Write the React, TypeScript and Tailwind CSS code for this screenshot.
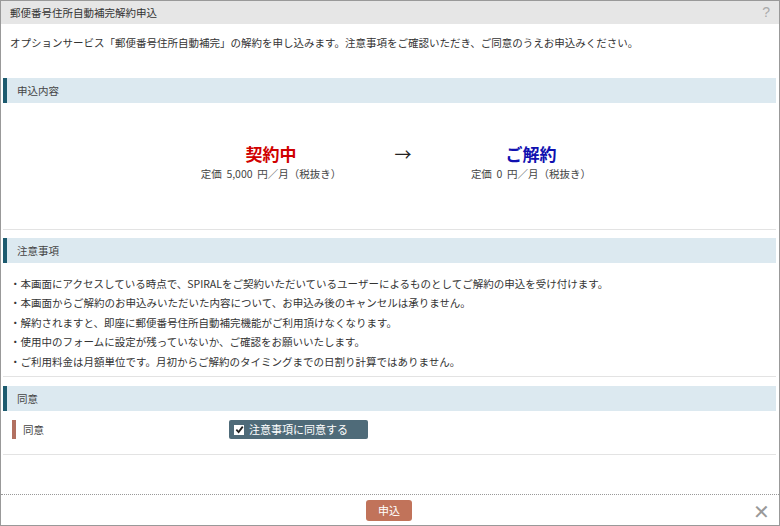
import React from "react";

const notes = [
  "本画面にアクセスしている時点で、SPIRALをご契約いただいているユーザーによるものとしてご解約の申込を受け付けます。",
  "本画面からご解約のお申込みいただいた内容について、お申込み後のキャンセルは承りません。",
  "解約されますと、即座に郵便番号住所自動補完機能がご利用頂けなくなります。",
  "使用中のフォームに設定が残っていないか、ご確認をお願いいたします。",
  "ご利用料金は月額単位です。月初からご解約のタイミングまでの日割り計算ではありません。",
];

function SectionHeader({ title }: { title: string }) {
  return (
    <div className="flex h-[25px] items-center bg-[#dce9f0] border-l-[4px] border-[#1d5b6f] pl-[10px] text-[#444]">
      {title}
    </div>
  );
}

function PlanBlock({ label, color, price }: { label: string; color: string; price: string }) {
  return (
    <div className="flex flex-col items-center">
      <div className={`text-[17px] font-bold leading-[22px] ${color}`}>{label}</div>
      <div className="mt-[1px] text-[10.5px] text-[#444] leading-[16px] whitespace-pre">{price}</div>
    </div>
  );
}

export default function App() {
  return (
    <div
      className="w-[780px] h-[526px] flex flex-col border border-[#999] bg-white text-[10.5px] text-[#333] overflow-hidden"
      style={{ fontFamily: '"Noto Sans CJK JP", "Noto Sans", sans-serif' }}
    >
      {/* title bar */}
      <div className="flex h-[23px] shrink-0 items-center justify-between bg-[#e6e6e6] pl-[9px] pr-[9px]">
        <span className="text-[#333]">郵便番号住所自動補完解約申込</span>
        <span className="text-[14px] text-[#aaa]" style={{ fontFamily: '"Liberation Sans", sans-serif' }}>?</span>
      </div>

      <div className="flex-1 pl-[2px] pr-[3px]">
        <p className="pl-[7px] pt-[10px] leading-[18px]">
          オプションサービス「郵便番号住所自動補完」の解約を申し込みます。注意事項をご確認いただき、ご同意のうえお申込みください。
        </p>

        <div className="mt-[26px]">
          <SectionHeader title="申込内容" />
          <div className="flex h-[126px] items-center pl-[168px] pb-[8px]">
            <div className="w-[200px] flex justify-center">
              <PlanBlock label="契約中" color="text-[#d00000]" price="定価  5,000  円／月（税抜き）" />
            </div>
            <div className="w-[64px] text-center text-[17px] text-[#222] -mt-[16px]">→</div>
            <div className="w-[192px] flex justify-center">
              <PlanBlock label="ご解約" color="text-[#1010b0]" price="定価  0  円／月（税抜き）" />
            </div>
          </div>
          <div className="h-px bg-[#e3e3e3]" />
        </div>

        <div className="mt-[8px]">
          <SectionHeader title="注意事項" />
          <ul className="pt-[11px] pb-[5px] pl-[7px]">
            {notes.map((n) => (
              <li key={n} className="leading-[19.4px]">・{n}</li>
            ))}
          </ul>
          <div className="h-px bg-[#e3e3e3]" />
        </div>

        <div className="mt-[9px]">
          <SectionHeader title="同意" />
          <div className="flex items-center h-[19px] mt-[9px]">
            <div className="w-[226px] flex items-center pl-[9px]">
              <span className="w-[4px] h-[19px] bg-[#b27060]" />
              <span className="pl-[7px] text-[#444]">同意</span>
            </div>
            <label className="flex items-center h-[19px] w-[139px] rounded-[2px] bg-[#4f6b79] pl-[5px] text-white text-[11px]">
              <span className="flex h-[10px] w-[10px] items-center justify-center bg-white">
                <svg width="9" height="9" viewBox="0 0 10 10">
                  <path d="M1.5 5.2 L4 7.8 L8.6 1.8" fill="none" stroke="#222" strokeWidth="2" />
                </svg>
              </span>
              <span className="pl-[5px]">注意事項に同意する</span>
            </label>
          </div>
          <div className="h-px bg-[#e3e3e3] mt-[15px]" />
        </div>
      </div>

      {/* footer */}
      <div className="relative flex h-[31px] shrink-0 items-center justify-center border-t border-dotted border-[#999]">
        <button className="h-[21px] w-[46px] rounded-[3px] bg-[#c1735a] text-white text-[11px] -ml-[2px]">申込</button>
        <span className="absolute right-[9px] top-[6px] text-[20px] leading-[20px] text-[#999]">✕</span>
      </div>
    </div>
  );
}
